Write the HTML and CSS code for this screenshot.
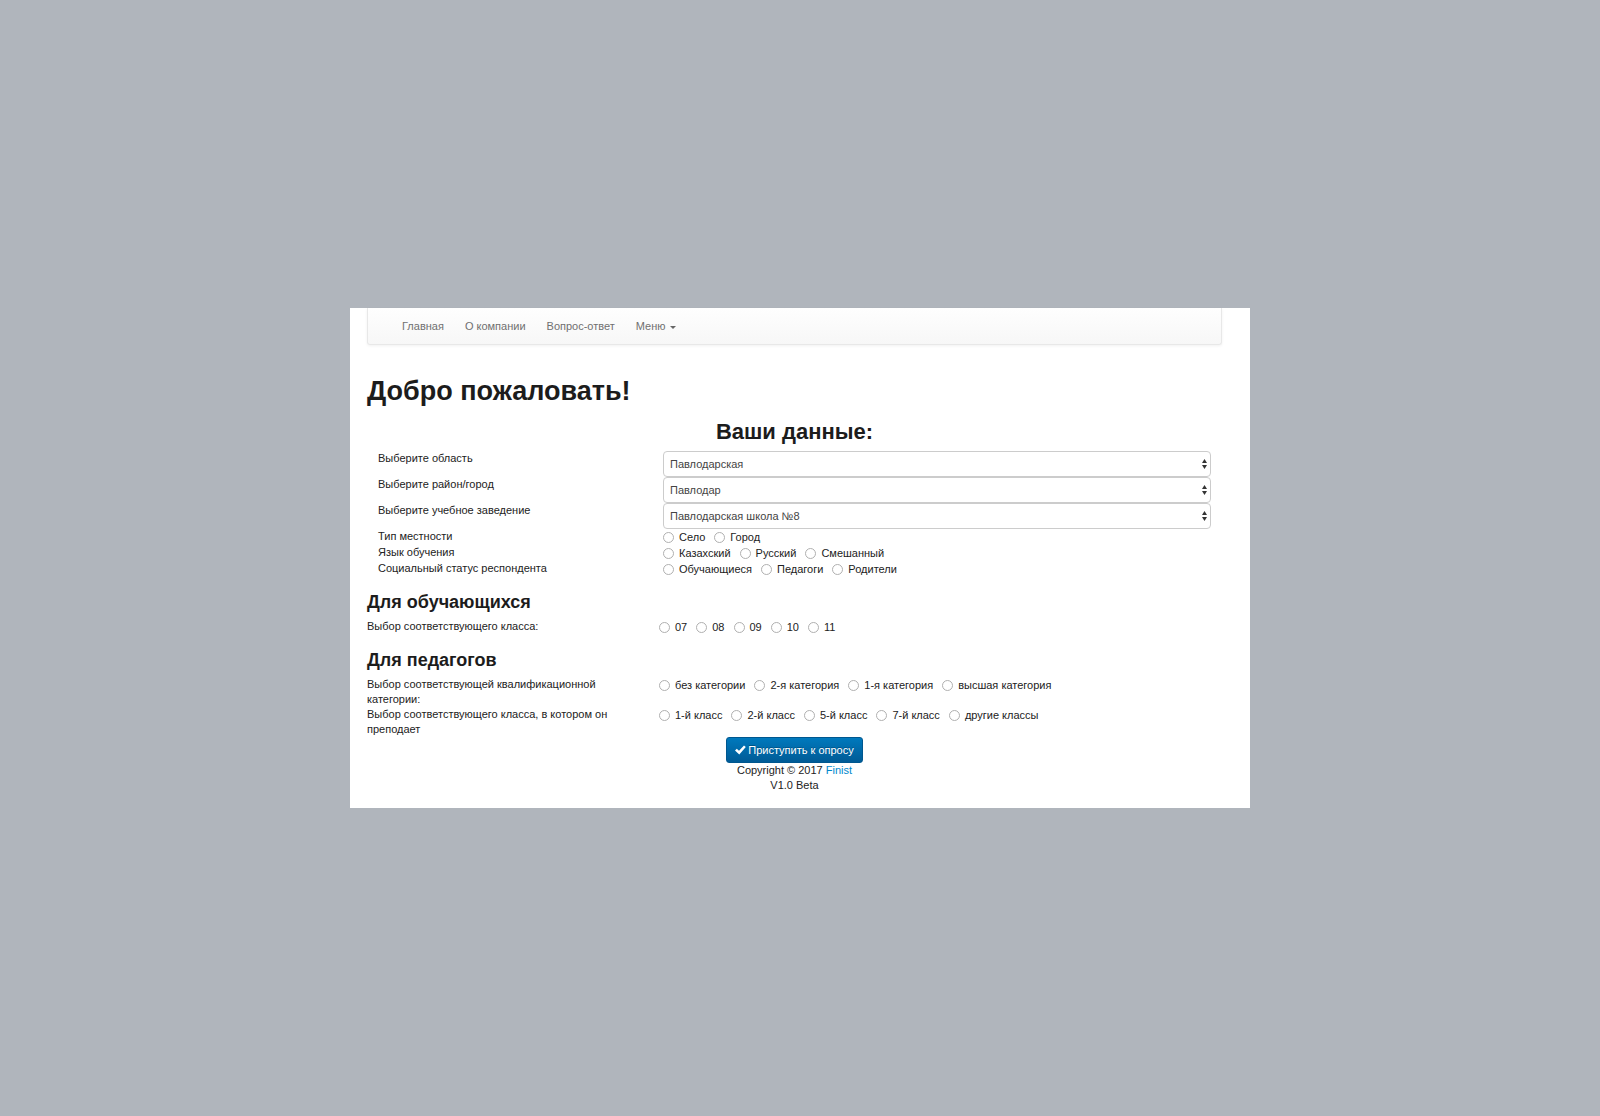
FILE: index.html
```html
<!DOCTYPE html>
<html lang="ru">
<head>
<meta charset="utf-8">
<meta name="viewport" content="width=device-width, initial-scale=1">
<title>Добро пожаловать!</title>
<link rel="stylesheet" href="styles.css">
</head>
<body>
<div class="page">
  <nav class="navbar">
    <a href="#">Главная</a>
    <a href="#">О компании</a>
    <a href="#">Вопрос-ответ</a>
    <a href="#">Меню <span class="caret"></span></a>
  </nav>
  <main>
    <h1>Добро пожаловать!</h1>
    <form>
      <h2>Ваши данные:</h2>
      <div class="details">
        <div class="row">
          <label for="region">Выберите область</label>
          <div class="select">
            <select id="region"><option>Павлодарская</option></select>
            <svg class="arrows" viewBox="0 0 5 10" aria-hidden="true"><path d="M2.5 0 5 4H0zM0 6h5L2.5 10z"/></svg>
          </div>
        </div>
        <div class="row">
          <label for="city">Выберите район/город</label>
          <div class="select">
            <select id="city"><option>Павлодар</option></select>
            <svg class="arrows" viewBox="0 0 5 10" aria-hidden="true"><path d="M2.5 0 5 4H0zM0 6h5L2.5 10z"/></svg>
          </div>
        </div>
        <div class="row">
          <label for="school">Выберите учебное заведение</label>
          <div class="select">
            <select id="school"><option>Павлодарская школа №8</option></select>
            <svg class="arrows" viewBox="0 0 5 10" aria-hidden="true"><path d="M2.5 0 5 4H0zM0 6h5L2.5 10z"/></svg>
          </div>
        </div>
        <div class="row" role="radiogroup" aria-labelledby="area">
          <span id="area">Тип местности</span>
          <div class="options">
            <label><input type="radio" name="area">Село</label>
            <label><input type="radio" name="area">Город</label>
          </div>
        </div>
        <div class="row" role="radiogroup" aria-labelledby="lang">
          <span id="lang">Язык обучения</span>
          <div class="options">
            <label><input type="radio" name="lang">Казахский</label>
            <label><input type="radio" name="lang">Русский</label>
            <label><input type="radio" name="lang">Смешанный</label>
          </div>
        </div>
        <div class="row" role="radiogroup" aria-labelledby="status">
          <span id="status">Социальный статус респондента</span>
          <div class="options">
            <label><input type="radio" name="status">Обучающиеся</label>
            <label><input type="radio" name="status">Педагоги</label>
            <label><input type="radio" name="status">Родители</label>
          </div>
        </div>
      </div>

      <h3>Для обучающихся</h3>
      <div class="row wide" role="radiogroup" aria-labelledby="grade">
        <span id="grade">Выбор соответствующего класса:</span>
        <div class="options">
          <label><input type="radio" name="grade">07</label>
          <label><input type="radio" name="grade">08</label>
          <label><input type="radio" name="grade">09</label>
          <label><input type="radio" name="grade">10</label>
          <label><input type="radio" name="grade">11</label>
        </div>
      </div>

      <h3>Для педагогов</h3>
      <div class="row wide" role="radiogroup" aria-labelledby="category">
        <span id="category">Выбор соответствующей квалификационной категории:</span>
        <div class="options">
          <label><input type="radio" name="category">без категории</label>
          <label><input type="radio" name="category">2-я категория</label>
          <label><input type="radio" name="category">1-я категория</label>
          <label><input type="radio" name="category">высшая категория</label>
        </div>
      </div>
      <div class="row wide" role="radiogroup" aria-labelledby="teaches">
        <span id="teaches">Выбор соответствующего класса, в котором он преподает</span>
        <div class="options">
          <label><input type="radio" name="teaches">1-й класс</label>
          <label><input type="radio" name="teaches">2-й класс</label>
          <label><input type="radio" name="teaches">5-й класс</label>
          <label><input type="radio" name="teaches">7-й класс</label>
          <label><input type="radio" name="teaches">другие классы</label>
        </div>
      </div>
      <button class="start" type="submit">
        <svg class="check" viewBox="0 0 11 10" aria-hidden="true"><path d="M0 5.6 1.8 3.8 4 5.8 9 .4 10.8 2 4.3 9.4z"/></svg>
        Приступить к опросу
      </button>
    </form>
  </main>
  <footer>
    <div>Copyright © 2017 <a href="#">Finist</a></div>
    <div>V1.0 Beta</div>
  </footer>
</div>
</body>
</html>
```

FILE: styles.css
```css
* {
  box-sizing: border-box;
}

body {
  margin: 0;
  min-height: 100vh;
  display: flex;
  align-items: center;
  justify-content: center;
  background: #b0b5bc;
  color: #222;
  font: 11px/15px "Liberation Sans", Arial, sans-serif;
}

.page {
  width: 100%;
  max-width: 900px;
  padding: 0 28px 15px 17px;
  background: #fff;
}

.navbar {
  display: flex;
  flex-wrap: wrap;
  gap: 21px;
  padding: 11px 34px 10px;
  border: 1px solid #e8e8e8;
  border-top: 0;
  border-radius: 0 0 3px 3px;
  background: linear-gradient(#fefefe, #f7f7f7);
  box-shadow: 0 1px 3px rgba(0, 0, 0, 0.06);
}

.navbar a {
  color: #707070;
  text-decoration: none;
}

.caret {
  display: inline-block;
  margin-left: 1px;
  vertical-align: middle;
  border: 3px solid transparent;
  border-top-color: #666;
  border-bottom: 0;
}

h1,
h2,
h3 {
  color: #1c1c1c;
  font-weight: 700;
}

h1 {
  margin: 32px 0 15px;
  font-size: 27px;
  line-height: 28px;
}

h2 {
  margin: 0 0 7px;
  font-size: 22px;
  line-height: 24px;
  text-align: center;
}

h3 {
  margin: 13px 0 5px;
  font-size: 18px;
  line-height: 24px;
}

.details {
  padding: 0 11px;
}

.row {
  display: grid;
  grid-template-columns: 250px 1fr;
  column-gap: 35px;
  min-height: 16px;
}

.wide {
  column-gap: 42px;
}

.select {
  position: relative;
}

.select select {
  display: block;
  width: 100%;
  height: 26px;
  padding: 0 20px 0 6px;
  appearance: none;
  border: 1px solid #ccc;
  border-radius: 4px;
  background: #fff;
  color: #444;
  font: inherit;
}

.arrows {
  position: absolute;
  top: 8px;
  right: 4px;
  width: 5px;
  height: 10px;
  fill: #333;
}

.options {
  display: flex;
  flex-wrap: wrap;
  align-items: flex-start;
  gap: 0 9px;
}

.options label {
  display: flex;
  align-items: center;
  gap: 5px;
  line-height: 16px;
}

.options input {
  width: 11px;
  height: 11px;
  margin: 0;
  appearance: none;
  border: 1px solid #b0b0b0;
  border-radius: 50%;
  background: #fff;
}

.options input:checked {
  border: 4px solid #0074b8;
}

.start {
  display: flex;
  align-items: center;
  gap: 2px;
  height: 26px;
  margin: 0 auto;
  padding: 0 8px;
  border: 1px solid #00578f;
  border-radius: 3px;
  background: linear-gradient(#0079bd, #005b96);
  color: #fff;
  font: inherit;
  text-shadow: 0 -1px 0 rgba(0, 0, 0, 0.25);
}

.check {
  width: 11px;
  height: 10px;
  fill: #fff;
}

footer {
  text-align: center;
}

footer a {
  color: #0088cc;
  text-decoration: none;
}
```
